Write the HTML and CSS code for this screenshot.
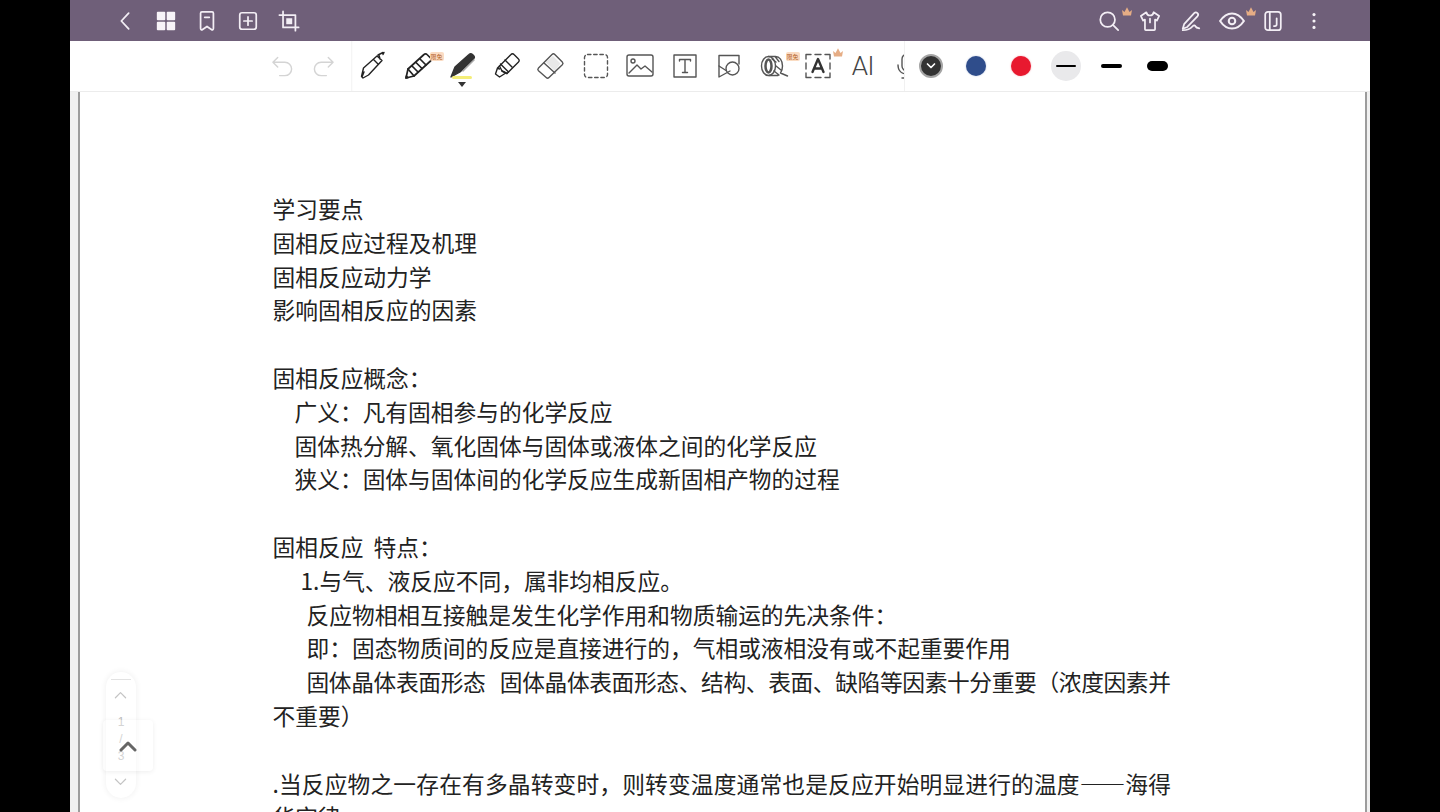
FILE: index.html
```html
<!DOCTYPE html>
<html lang="zh-CN">
<head>
<meta charset="utf-8">
<title>固相反应</title>
<link rel="stylesheet" href="styles.css">
</head>
<body>
<div class="app">
  <header class="topbar">
    <div class="top-group">
      <span class="top-btn"><svg viewBox="0 0 24 24" class="ti"><path d="M16 3.500 8 12l8 8.500"/></svg></span>
      <span class="top-btn"><svg viewBox="0 0 24 24" class="ti fill"><rect x="2" y="2" width="9.200" height="9.200" rx="1"/><rect x="12.800" y="2" width="9.200" height="9.200" rx="1"/><rect x="2" y="12.800" width="9.200" height="9.200" rx="1"/><rect x="12.800" y="12.800" width="9.200" height="9.200" rx="1"/></svg></span>
      <span class="top-btn"><svg viewBox="0 0 24 24" class="ti"><path d="M5 3.500a1.500 1.500 0 0 1 1.500-1.500h11A1.500 1.500 0 0 1 19 3.500V20c0 1.500-1 2-2.200 1.200L12 18l-4.800 3.200C6 22 5 21.500 5 20Z"/><path d="M9.500 8h5"/></svg></span>
      <span class="top-btn"><svg viewBox="0 0 24 24" class="ti"><rect x="3" y="3" width="18" height="18" rx="2.500"/><path d="M12 7.500v9M7.500 12h9"/></svg></span>
      <span class="top-btn"><svg viewBox="0 0 24 24" class="ti"><path d="M1.500 5.500H19v17M5.500 1.500V19h17"/><rect x="9" y="9" width="6.500" height="6.500" class="solid"/></svg></span>
    </div>
    <div class="top-group">
      <span class="top-btn"><svg viewBox="0 0 24 24" class="ti"><circle cx="10.500" cy="10.500" r="8"/><path d="m16.500 16.500 5.500 5.500"/></svg><svg viewBox="0 0 12 10" class="crown"><path d="M1 3.500 3.500 5.500 6 .8l2.500 4.700L11 3.500 10 9H2Z"/></svg></span>
      <span class="top-btn"><svg viewBox="0 0 24 24" class="ti"><path d="M8 2.500 2 6.500l2.500 5L6.500 10.500V21a1 1 0 0 0 1 1h9a1 1 0 0 0 1-1V10.500l2 1 2.500-5-6-4c-.5 2.500-2 3.500-4 3.500s-3.500-1-4-3.500Z"/><path d="M12 9.500v4"/></svg></span>
      <span class="top-btn"><svg viewBox="0 0 24 24" class="ti"><path d="M4.500 15.500 15.500 3.500a2.500 2.500 0 0 1 3.500 0 2.500 2.500 0 0 1 0 3.500L8 18.500 3 20.500Z"/><path d="M3 22c5 0 8-1 10.500-4 2-2 3-1 3.500 0s1.500 1.500 4 2"/></svg></span>
      <span class="top-btn"><svg viewBox="0 0 24 24" class="ti wide"><path d="M1 12c3-4.500 6.500-7 11-7s8 2.500 11 7c-3 4.500-6.500 7-11 7s-8-2.500-11-7Z"/><circle cx="12" cy="12" r="3"/></svg><svg viewBox="0 0 12 10" class="crown crown-eye"><path d="M1 3.500 3.500 5.500 6 .8l2.500 4.700L11 3.500 10 9H2Z"/></svg></span>
      <span class="top-btn"><svg viewBox="0 0 24 24" class="ti"><rect x="3.500" y="2" width="17" height="20" rx="3"/><path d="M8.500 2v20M16 9v6.500a2 2 0 0 1-2 2h-1"/></svg></span>
      <span class="top-btn"><svg viewBox="0 0 24 24" class="ti fill"><circle cx="12" cy="5" r="1.700"/><circle cx="12" cy="12" r="1.700"/><circle cx="12" cy="19" r="1.700"/></svg></span>
    </div>
  </header>

  <div class="toolbar">
    <div class="history">
      <span class="hist-btn"><svg viewBox="0 0 24 24" class="hi"><path d="M7 2.500 2 7.500l5 5M2 7.500h12.500a7 7 0 0 1 0 14H9"/></svg></span>
      <span class="hist-btn"><svg viewBox="0 0 24 24" class="hi"><path d="m17 2.500 5 5-5 5M22 7.500H9.500a7 7 0 0 0 0 14H15"/></svg></span>
    </div>
    <div class="tools">
      <span class="tool"><svg viewBox="0 0 30 30" class="tl"><path d="M5 27 3.500 25.500 5.500 17 19 5l5 4.500L10.500 24Z M6 21l-2 5M20 4l5-2.500M22 8l-1-4M16 9l4 4M26 1.500l-1 2"/></svg></span>
      <span class="tool"><svg viewBox="0 0 30 30" class="tl heavy"><path d="M3 27 5 18 21 3.500a2 2 0 0 1 3 0L27.500 7a2 2 0 0 1 0 3L11 25Z"/><path d="M5 18l6 7M9 15l6 6M13 11.500l6 6M17 8l6 6M3 27l1.800-.4-1.400-1.500Z"/></svg><span class="free">限免</span></span>
      <span class="tool"><svg viewBox="0 0 30 30" class="tl"><path class="solid-dark" d="M4 26 8 16 22 3.500a2.500 2.500 0 0 1 3.500 0l1 1a2.500 2.500 0 0 1 0 3.500L13 21Z"/><path d="M16 20 27 9" class="thin"/></svg><i class="hl-bar"></i><i class="hl-caret"></i></span>
      <span class="tool"><svg viewBox="0 0 30 30" class="tl"><path d="M10 20 7.500 15 19 3.500a2 2 0 0 1 3 0L26.500 8a2 2 0 0 1 0 3L15 22.500Z"/><path d="M7.500 15l-2 2 2 1M5.500 17l-2 6 4 3 5.500-3.500M10 20l5 2.500M8.500 13l8 8M13 9l7 7"/></svg></span>
      <span class="tool"><svg viewBox="0 0 30 30" class="tl grey"><path class="pale" d="M17 5l7.500 7.500L19 20l-9.500-9Z"/><path d="M2.500 17 16 3.500a2 2 0 0 1 2.800 0l7.500 7.500a2 2 0 0 1 0 2.800L13 26.500a2 2 0 0 1-2.800 0l-7.700-6.700a2 2 0 0 1 0-2.800Z"/><path d="m8 12 11 10"/></svg></span>
      <span class="tool"><svg viewBox="0 0 30 30" class="tl grey"><rect x="3.500" y="3.500" width="23" height="23" rx="3" stroke-dasharray="3.400 2.800"/></svg></span>
      <span class="tool"><svg viewBox="0 0 30 30" class="tl grey"><rect x="2" y="4" width="26" height="21" rx="2"/><circle cx="8" cy="10" r="2"/><path d="m4 22 8-8 4 4 4-3 7 6"/></svg></span>
      <span class="tool"><svg viewBox="0 0 30 30" class="tl grey"><rect x="4" y="4" width="22" height="22"/><path d="M9.500 10V8.500h11V10M15 8.500v13M12.500 21.500h5"/></svg></span>
      <span class="tool"><svg viewBox="0 0 30 30" class="tl grey"><path d="M5 15V4.500h20V13M5 15v11l11-6"/><circle cx="18.500" cy="17.500" r="6.500"/><path d="M5 15l7 4.500"/></svg></span>
      <span class="tool"><svg viewBox="0 0 30 30" class="tl grey"><ellipse cx="9.500" cy="15" rx="7" ry="9.500"/><ellipse cx="9.500" cy="15" rx="3" ry="6.500" class="pale-dark"/><path d="M9.500 5.500h7c4 0 7 4 7 9.500 0 3-1 5.500-2 7l7 3M13 8l4 3M16 5.500l4 5M17 15l5 4M15 20l5 4M10 24.500h9"/></svg><span class="free">限免</span></span>
      <span class="tool"><svg viewBox="0 0 30 30" class="tl grey"><path d="M3 8V3.500h5M27 8V3.500h-5M3 22v4.500h5M27 22v4.500h-5M12 3.500h6M12 26.500h6M3 12v6M27 12v6"/><path d="M9.500 21 15 8l5.500 13M11 17.500h8" class="bold"/></svg><svg viewBox="0 0 12 10" class="crown crown-tool"><path d="M1 3.500 3.500 5.500 6 .8l2.500 4.700L11 3.500 10 9H2Z"/></svg></span>
      <span class="tool ai">AI</span>
      <span class="tool"><svg viewBox="0 0 30 30" class="tl grey"><rect x="10" y="3" width="10" height="17" rx="5"/><path d="M6 14c0 6 4 9 9 9s9-3 9-9M15 23v4M10 27h10"/></svg></span>
    </div>
    <div class="palette">
      <span class="swatch"><i class="dot dot-ink"><svg viewBox="0 0 12 12" class="dot-chev"><path d="m2.500 4 3.500 3.500L9.500 4"/></svg></i></span>
      <span class="swatch"><i class="dot dot-blue"></i></span>
      <span class="swatch"><i class="dot dot-red"></i></span>
      <span class="swatch"><span class="stroke-sel"><i class="stroke s1"></i></span></span>
      <span class="swatch"><i class="stroke s2"></i></span>
      <span class="swatch swatch-last"><i class="stroke s3"></i></span>
    </div>
  </div>

  <main class="sheet">
    <article class="doc">
      <p>学习要点</p>
      <p>固相反应过程及机理</p>
      <p>固相反应动力学</p>
      <p>影响固相反应的因素</p>
      <p class="blank">&nbsp;</p>
      <p>固相反应概念：</p>
      <p class="in-a">广义：凡有固相参与的化学反应</p>
      <p class="in-a">固体热分解、氧化固体与固体或液体之间的化学反应</p>
      <p class="in-a">狭义：固体与固体间的化学反应生成新固相产物的过程</p>
      <p class="blank">&nbsp;</p>
      <p>固相反应&nbsp;&nbsp;特点：</p>
      <p class="in-b">1.与气、液反应不同，属非均相反应。</p>
      <p class="in-c">反应物相相互接触是发生化学作用和物质输运的先决条件：</p>
      <p class="in-c">即：固态物质间的反应是直接进行的，气相或液相没有或不起重要作用</p>
      <p class="in-c tight">固体晶体表面形态&nbsp;&nbsp;固体晶体表面形态、结构、表面、缺陷等因素十分重要（浓度因素并</p>
      <p>不重要）</p>
      <p class="blank">&nbsp;</p>
      <p class="loose">.当反应物之一存在有多晶转变时，则转变温度通常也是反应开始明显进行的温度——海得</p>
      <p>华定律</p>
    </article>
    <aside class="pager">
      <i class="pager-line"></i>
      <svg viewBox="0 0 14 8" class="pager-chev"><path d="m1.500 7 5.500-5.500L12.500 7"/></svg>
      <span class="pager-num">1</span>
      <span class="pager-num">/</span>
      <span class="pager-num">3</span>
      <svg viewBox="0 0 14 8" class="pager-chev pager-down"><path d="m1.500 1 5.500 5.500L12.500 1"/></svg>
    </aside>
    <button class="to-top" aria-label="top"><svg viewBox="0 0 18 12"><path d="m2 10 7-7 7 7"/></svg></button>
  </main>
</div>
</body>
</html>
```
FILE: styles.css
```css
* { box-sizing: border-box; }
html, body { margin: 0; height: 100%; background: #000; overflow: hidden; }
body { font-family: "Noto Sans CJK SC", "Liberation Sans", sans-serif; }
.app { margin: 0 70px; height: 812px; display: flex; flex-direction: column; background: #fff; overflow: hidden; }

.topbar { flex: 0 0 41px; background: #6f5f79; display: flex; justify-content: space-between; padding: 0 35.500px 0 34.500px; }
.top-group { display: flex; }
.top-btn { position: relative; width: 41px; height: 41px; display: flex; align-items: center; justify-content: center; }
.ti { width: 22px; height: 22px; fill: none; stroke: #f3eef5; stroke-width: 1.900; stroke-linecap: round; stroke-linejoin: round; }
.ti.wide { width: 26px; height: 26px; }
.ti.fill { fill: #f7f3f8; stroke: none; }
.ti .solid { fill: #f3eef5; stroke: none; }
.crown { position: absolute; left: 32px; top: 6px; width: 12px; height: 11px; fill: #e6ad85; }
.crown-eye { left: 33px; }
.crown-tool { left: 36px; top: 6px; }

.toolbar { flex: 0 0 51px; display: flex; background: #fff; border-bottom: 1px solid #ececec; }
.history { flex: 0 0 281px; display: flex; padding-left: 191.500px; align-items: center; }
.hist-btn { width: 41.500px; display: flex; justify-content: center; }
.hi { width: 23px; height: 25px; fill: none; stroke: #d4d4d4; stroke-width: 1.500; stroke-linecap: round; stroke-linejoin: round; }
.tools { flex: 0 0 553px; display: flex; overflow: hidden; box-shadow: inset 2px 0 2px -1px #f2f2f2; }
.tool { position: relative; flex: 0 0 44.500px; height: 50px; display: flex; align-items: center; justify-content: center; }
.tl { width: 30px; height: 30px; fill: none; stroke: #222; stroke-width: 1.400; stroke-linecap: round; stroke-linejoin: round; }
.tl.heavy { stroke-width: 1.700; }
.tl.grey { stroke: #555; }
.tl .solid-dark { fill: #333; stroke: #333; }
.tl .thin { stroke: #aaa; }
.tl .pale { fill: #e8e8e8; stroke: none; }
.tl .pale-dark { stroke-width: 2.500; }
.tl .bold { stroke: #333; stroke-width: 2.400; }
.free { position: absolute; left: 34px; top: 11px; width: 14px; height: 9px; background: #fbdcc3; color: #b4632a; font-size: 6px; line-height: 9px; text-align: center; border-radius: 2px; white-space: nowrap; }
.hl-bar { position: absolute; left: 12px; top: 35px; width: 20px; height: 3px; background: #f4ee78; border-radius: 2px; }
.hl-caret { position: absolute; left: 18px; top: 41px; border: 4px solid transparent; border-top: 5px solid #333; border-bottom: 0; }
.tool.ai { font-family: Roboto, "Liberation Sans", sans-serif; font-size: 26px; color: #444; font-weight: 300; letter-spacing: -.5px; }

.palette { flex: 1; display: flex; align-items: center; padding-left: 3.500px; border-left: 1px solid #f1f1f1; }
.swatch { flex: 0 0 45px; display: flex; align-items: center; justify-content: center; }
.swatch-last { margin-left: 1px; }
.dot { width: 20px; height: 20px; border-radius: 50%; display: flex; align-items: center; justify-content: center; }
.dot-ink { width: 24px; height: 24px; background: #333; border: 2px solid #a5a5a5; }
.dot-chev { width: 12px; height: 12px; fill: none; stroke: #fff; stroke-width: 1.700; stroke-linecap: round; stroke-linejoin: round; }
.dot-blue { background: #2f4d8b; box-shadow: 0 0 2px #b7c3dc; }
.dot-red { background: #e8192f; box-shadow: 0 0 2px #f2a2ac; }
.stroke-sel { width: 30px; height: 30px; border-radius: 50%; background: #e9e9eb; display: flex; align-items: center; justify-content: center; }
.stroke { display: block; background: #000; border-radius: 3px; }
.s1 { width: 20px; height: 2.500px; }
.s2 { width: 21px; height: 4px; }
.s3 { width: 21px; height: 10px; border-radius: 5px; }

.sheet { position: relative; flex: 1; min-height: 0; background: #fff; margin: 0; border-left: 8px solid #f0f0f0; border-right: 3px solid #f0f0f0; overflow: hidden; }
.sheet::before, .sheet::after { content: ""; position: absolute; top: 0; bottom: 0; width: 2px; background: #9c9c9c; }
.sheet::before { left: 0; }
.sheet::after { right: 0; }
.doc { width: 910px; margin-left: 194.500px; padding-top: 100px; color: #222; font-size: 22.720px; line-height: 33.800px; }
.doc p { margin: 0; white-space: nowrap; }
.in-a { padding-left: 22px; }
.in-b { padding-left: 28px; }
.in-c { padding-left: 34px; }
.tight { letter-spacing: -.36px; word-spacing: 2.500px; }
.loose { letter-spacing: .16px; }

.pager { position: absolute; left: 28px; top: 580px; width: 30px; height: 126px; border-radius: 15px; background: #fff; box-shadow: 0 0 6px rgba(0,0,0,.07); display: flex; flex-direction: column; align-items: center; }
.pager-line { width: 20px; height: 1px; background: #e2e2e2; margin-top: 7px; }
.pager-chev { width: 13px; height: 8px; margin: 11px 0 15px -1px; fill: none; stroke: #c4c4c4; stroke-width: 1.300; stroke-linecap: round; stroke-linejoin: round; flex: none; }
.pager-down { margin: 13px 0 0 -1px; }
.pager-num { font-family: "Liberation Sans", sans-serif; font-size: 12px; line-height: 17px; color: #bdbdbd; font-style: normal; }
.to-top { position: absolute; left: 25px; top: 628px; width: 50px; height: 51px; padding: 0; border: 0; border-radius: 4px; background: rgba(255,255,255,.35); box-shadow: 0 1px 5px rgba(0,0,0,.07); display: flex; align-items: center; justify-content: center; }
.to-top svg { width: 18px; height: 12px; fill: none; stroke: #666; stroke-width: 3; stroke-linejoin: round; stroke-linecap: round; }
```
